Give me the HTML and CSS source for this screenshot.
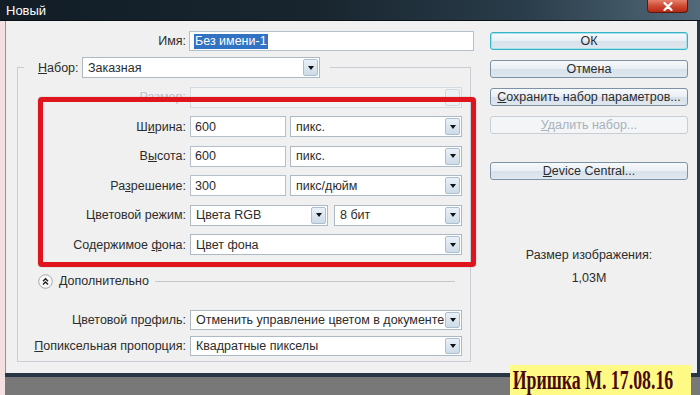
FILE: index.html
```html
<!DOCTYPE html>
<html lang="ru">
<head>
<meta charset="utf-8">
<title>Новый</title>
<link rel="stylesheet" href="styles.css">
</head>
<body>
<div class="screen">
  <div class="titlebar">
    <span class="title">Новый</span>
    <span class="close"><svg width="12" height="9" viewBox="0 0 12 9"><path d="M2.5 1 L9.5 8 M9.5 1 L2.5 8" stroke="#fff" stroke-width="2.2" stroke-linecap="round"/></svg></span>
  </div>
  <div class="frame">
    <div class="strip"></div>
    <div class="dialog">
      <div class="leftcol">
        <div class="name-row">
          <span class="name-lbl">Имя:</span>
          <div class="input name-input"><span class="sel">Без имени-1</span></div>
        </div>
        <fieldset class="group">
          <legend class="legend">
            <span class="legend-lbl"><u>Н</u>абор:</span>
            <div class="select preset"><span class="val">Заказная</span><span class="arrow"></span></div>
          </legend>
          <div class="row disabled">
            <span class="lbl">Размер:</span>
            <div class="select full off"><span class="val"></span><span class="arrow"></span></div>
          </div>
          <div class="row">
            <span class="lbl">Ш<u>и</u>рина:</span>
            <div class="input num">600</div>
            <div class="select unit"><span class="val">пикс.</span><span class="arrow"></span></div>
          </div>
          <div class="row">
            <span class="lbl">В<u>ы</u>сота:</span>
            <div class="input num">600</div>
            <div class="select unit"><span class="val">пикс.</span><span class="arrow"></span></div>
          </div>
          <div class="row">
            <span class="lbl">Ра<u>з</u>решение:</span>
            <div class="input num">300</div>
            <div class="select unit"><span class="val">пикс/дюйм</span><span class="arrow"></span></div>
          </div>
          <div class="row">
            <span class="lbl">Цветовой режим:</span>
            <div class="select mode"><span class="val">Цвета RGB</span><span class="arrow"></span></div>
            <div class="select bits"><span class="val">8 бит</span><span class="arrow"></span></div>
          </div>
          <div class="row">
            <span class="lbl">Содержимое <u>ф</u>она:</span>
            <div class="select full"><span class="val">Цвет фона</span><span class="arrow"></span></div>
          </div>
          <div class="advanced">
            <svg class="chev" width="15" height="15" viewBox="0 0 15 15"><circle cx="7.5" cy="7.5" r="6.8" fill="#f8f8f8" stroke="#a3abb3"/><path d="M5 7.2 L7.5 4.7 L10 7.2 M5 10.4 L7.5 7.9 L10 10.4" fill="none" stroke="#1d1d1d" stroke-width="1.4"/></svg>
            <span class="adv-text">Дополнительно</span>
            <span class="adv-line"></span>
          </div>
          <div class="row small first-small">
            <span class="lbl">Цветовой пр<u>о</u>филь:</span>
            <div class="select full"><span class="val">Отменить управление цветом в документе</span><span class="arrow"></span></div>
          </div>
          <div class="row small">
            <span class="lbl"><u>П</u>опиксельная пропорция:</span>
            <div class="select full"><span class="val">Квадратные пикселы</span><span class="arrow"></span></div>
          </div>
        </fieldset>
      </div>
      <div class="rightcol">
        <div class="btn default">ОК</div>
        <div class="btn">Отмена</div>
        <div class="btn"><u>С</u>охранить набор параметров...</div>
        <div class="btn disabled"><u>У</u>далить набор...</div>
        <div class="btn device"><u>D</u>evice Central...</div>
        <div class="info">Размер изображения:</div>
        <div class="info size">1,03M</div>
      </div>
    </div>
  </div>
  <div class="bottom">
    <div class="strip"></div>
    <div class="band"></div>
  </div>
  <div class="annot"></div>
  <div class="signature"><span>Иришка М. 17.08.16</span></div>
</div>
</body>
</html>
```

FILE: styles.css
```css
* { box-sizing: border-box; }
html, body { margin: 0; padding: 0; }
body {
  width: 700px;
  height: 395px;
  overflow: hidden;
  font-family: "Liberation Sans", Arial, sans-serif;
  font-size: 12.5px;
  color: #2c2c2c;
  background: #787878;
}
u { text-decoration-thickness: 1px; text-underline-offset: 1px; }

.screen {
  position: relative;
  width: 700px;
  height: 395px;
  display: flex;
  flex-direction: column;
}

/* title bar */
.titlebar {
  height: 21px;
  flex: none;
  display: flex;
  align-items: flex-start;
  background: linear-gradient(90deg, #121d26 0%, #18252f 45%, #2a3d4a 75%, #52697a 100%);
  border-bottom: 1px solid #0b1217;
}
.title {
  color: #ffffff;
  font-size: 13px;
  padding: 3px 0 0 6px;
}
.close {
  margin-left: auto;
  margin-right: 12px;
  width: 41px;
  height: 13px;
  display: flex;
  align-items: center;
  justify-content: center;
  background: linear-gradient(#e5806c 0%, #cf4a33 50%, #b52a16 100%);
  border: 1px solid #5a1a10;
  border-top: none;
  border-radius: 0 0 4px 4px;
}

/* frame */
.frame {
  height: 352px;
  flex: none;
  display: flex;
}
.strip {
  width: 5px;
  flex: none;
  background: #f4dfe1;
}
.dialog {
  flex: 1;
  display: flex;
  background: #f0f0f0;
  border-left: 1px solid #8a98a5;
  border-right: 3px solid #283744;
}

.leftcol {
  width: 474px;
  flex: none;
  padding-top: 10px;
}
.name-row {
  display: flex;
  align-items: center;
  height: 20px;
}
.name-lbl {
  width: 180px;
  text-align: right;
  margin-right: 3px;
}
.input {
  height: 21px;
  background: #ffffff;
  border: 1px solid #b4c0cb;
  padding-left: 4px;
  display: flex;
  align-items: center;
  white-space: nowrap;
}
.name-input {
  width: 285px;
  height: 20px;
}
.sel {
  background: #3272c2;
  color: #ffffff;
  padding: 0 1px;
  line-height: 15px;
}

/* group */
.group {
  margin: 6px 0 0 11px;
  width: 454px;
  min-width: 0;
  border: 1px solid #c8ced4;
  padding: 0 8px 5px 0;
}
.legend {
  margin-left: 6px;
  padding: 0 10px 0 14px;
  display: flex;
  align-items: center;
  height: 21px;
}
.legend-lbl {
  width: 44px;
  flex: none;
}
.select {
  height: 21px;
  display: flex;
  align-items: center;
  background: #ffffff;
  border: 1px solid #adb9c5;
  padding-left: 5px;
  flex: none;
}
.select .val {
  flex: 1;
  white-space: nowrap;
  overflow: hidden;
}
.arrow {
  width: 15px;
  height: 17px;
  margin-right: 1px;
  flex: none;
  display: flex;
  align-items: center;
  justify-content: center;
  background: linear-gradient(#eaf1f8, #cddbe8);
  border: 1px solid #abbfd1;
  border-radius: 2px;
}
.arrow::after {
  content: "";
  border-left: 3.5px solid transparent;
  border-right: 3.5px solid transparent;
  border-top: 4px solid #111111;
}
.preset { width: 238px; }
.full { width: 272px; }
.unit { width: 172px; margin-left: 4px; }
.num { width: 96px; }
.mode { width: 138px; }
.bits { width: 128px; margin-left: 6px; }

.row {
  display: flex;
  align-items: center;
  height: 21px;
  margin-top: 8.5px;
}
.row .lbl {
  width: 168px;
  flex: none;
  text-align: right;
  margin-right: 4px;
  white-space: nowrap;
}
.row.disabled .lbl { color: #bcc3ca; }
.select.off {
  background: #f4f4f4;
  border-color: #d3dae0;
}
.select.off .arrow {
  background: #eef1f4;
  border-color: #d0d8df;
}
.select.off .arrow::after { border-top-color: transparent; }

.advanced {
  display: flex;
  align-items: center;
  height: 16px;
  margin-top: 18px;
  padding-left: 20px;
}
.chev { flex: none; margin-right: 6px; }
.adv-line {
  flex: 1;
  height: 1px;
  background: #c3c7cb;
  margin: 0 7px 0 6px;
}
.row.small { height: 20px; margin-top: 6px; }
.row.small .select { height: 20px; }
.row.small .arrow { height: 16px; }
.row.first-small { margin-top: 20.5px; }

/* right column */
.rightcol {
  width: 198px;
  flex: none;
  margin-left: 10px;
  padding-top: 11px;
  display: flex;
  flex-direction: column;
}
.btn {
  height: 18px;
  margin-bottom: 10px;
  border: 1px solid #7e92a5;
  border-radius: 3px;
  background: linear-gradient(#f7f9fb 0%, #eaeff4 48%, #d8e2eb 52%, #dfe7ef 100%);
  text-align: center;
  line-height: 16px;
  white-space: nowrap;
}
.btn.default {
  border-color: #36b3c6;
  box-shadow: inset 0 0 0 1px #a6e3ec;
}
.btn.disabled {
  color: #a8b2bb;
  border-color: #c6cfd7;
  background: #f3f5f7;
}
.btn.device { margin-top: 18px; }
.info {
  text-align: center;
  line-height: 16px;
  margin-top: 57px;
}
.info.size { margin-top: 7px; }

/* bottom */
.bottom {
  height: 22px;
  flex: none;
  display: flex;
}
.band {
  flex: 1;
  background: #787878;
  border-top: 4px solid #273746;
}

/* annotations */
.annot {
  position: absolute;
  left: 38px;
  top: 97px;
  width: 438px;
  height: 170px;
  border: 5px solid #df141c;
  border-radius: 4px;
  box-shadow: 0 0 1px rgba(90, 0, 0, 0.6);
}
.signature {
  position: absolute;
  left: 510px;
  top: 365px;
  width: 181px;
  height: 30px;
  background: #fffa86;
  overflow: hidden;
}
.signature span {
  display: inline-block;
  font-family: "Liberation Serif", "Times New Roman", serif;
  font-weight: bold;
  font-size: 27px;
  line-height: 30px;
  color: #4a0a0a;
  white-space: nowrap;
  transform: scaleX(0.66);
  transform-origin: 2px 0;
  margin-left: 2px;
}
```
